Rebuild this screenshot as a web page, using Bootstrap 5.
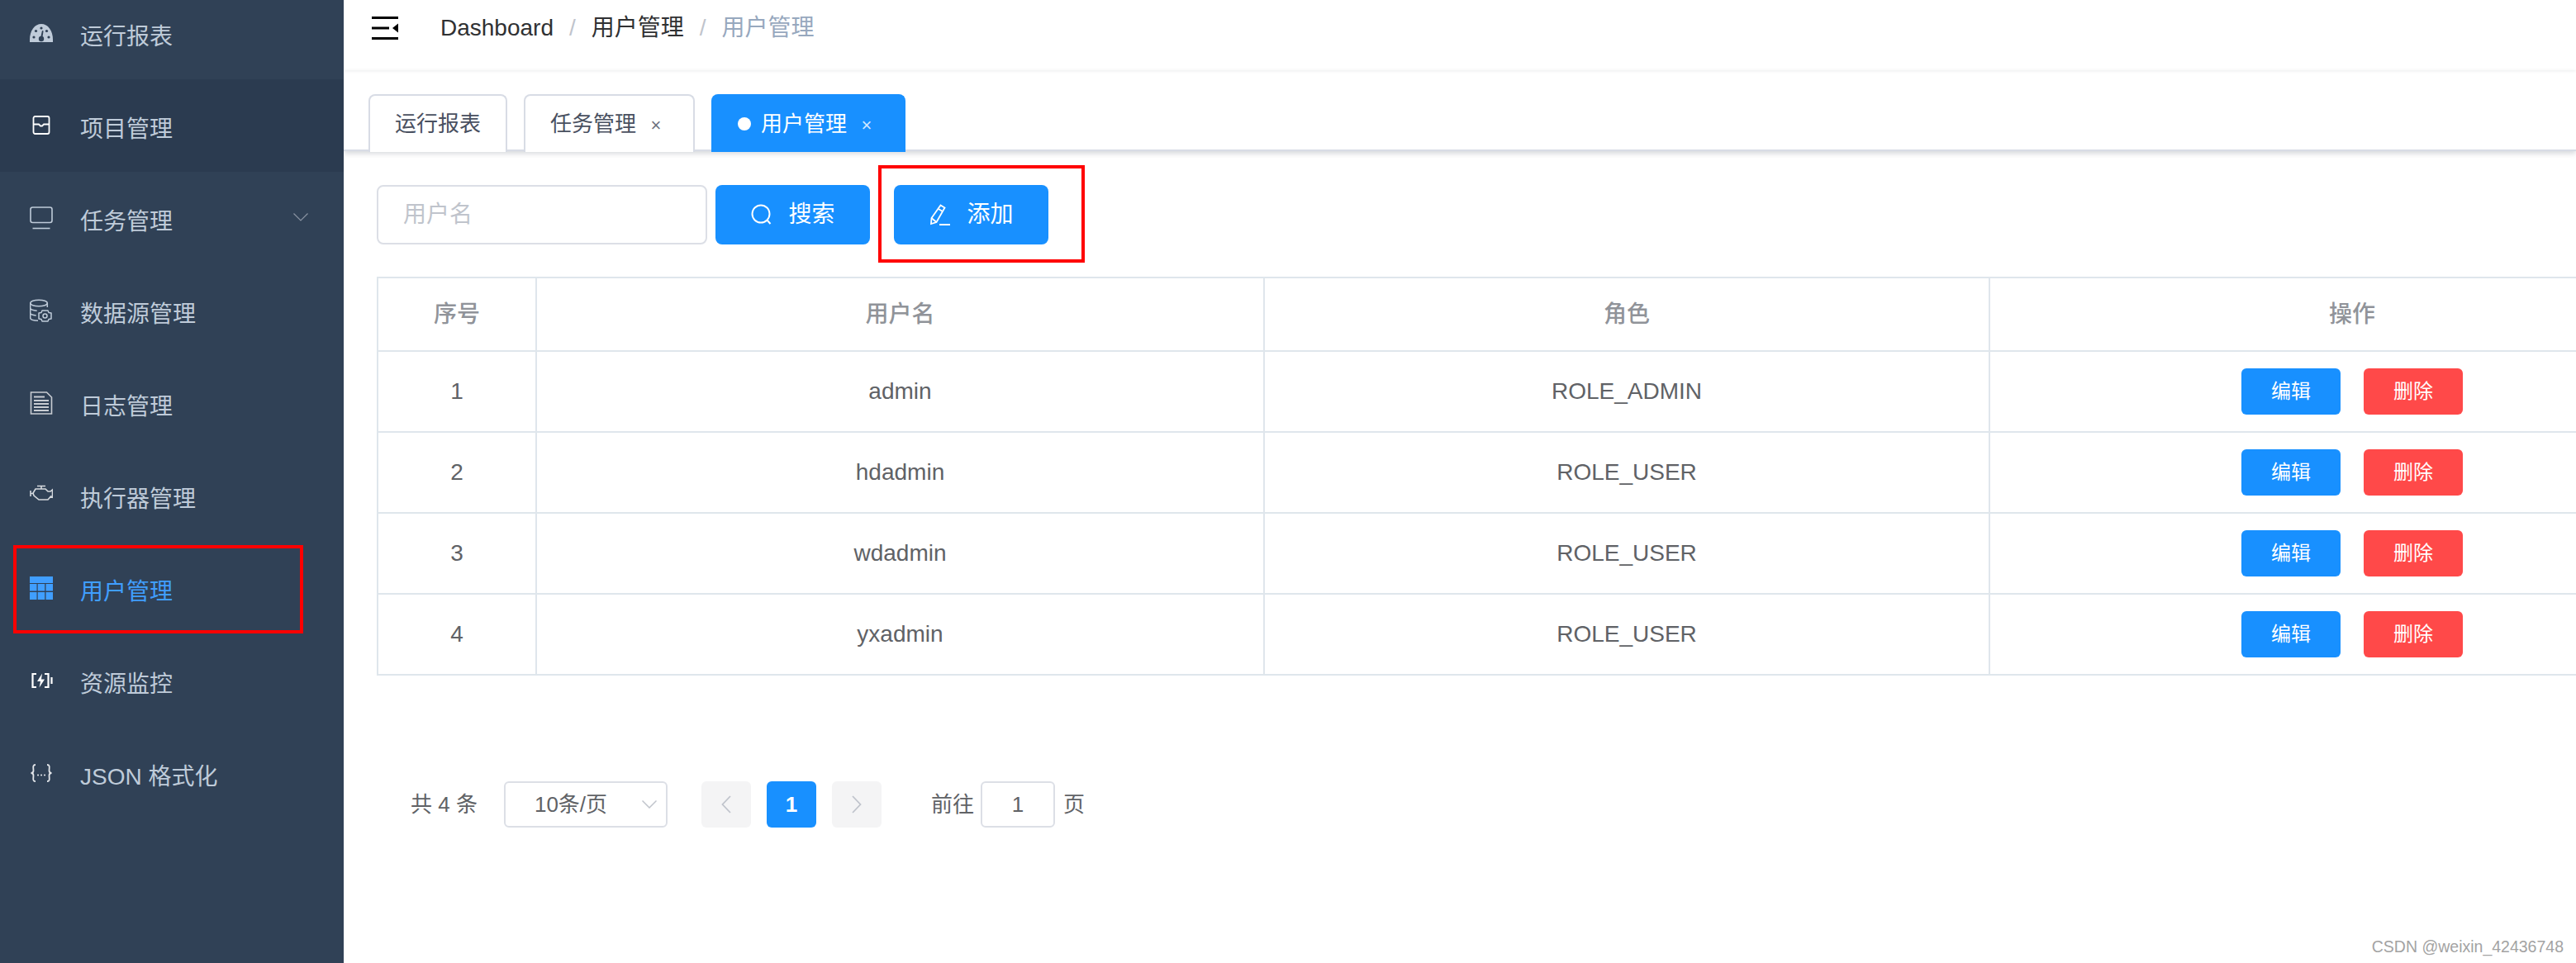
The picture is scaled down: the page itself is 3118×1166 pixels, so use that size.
<!DOCTYPE html>
<html lang="zh-CN">
<head>
<meta charset="utf-8">
<title>用户管理</title>
<link href="https://cdn.jsdelivr.net/npm/bootstrap@5.3.0/dist/css/bootstrap.min.css" rel="stylesheet">
<style>
html,body{height:1166px;overflow:hidden}
body{font-family:"Liberation Sans","Noto Sans CJK SC",sans-serif;font-size:28px;color:#606266;background:#fff;position:relative}
.shell{height:1166px}
.side{width:416px;flex:none;background:#304156;overflow:hidden}
.side-list{margin-top:-16px}
.side-item{height:112px;padding-left:36px;color:#bfcbd9;font-size:28px;text-decoration:none;gap:33px;position:relative}
.side-item span{padding-top:9px}
.side-item svg{width:28px;height:28px;flex:none;display:block}
.side-item.dim{background:#2b3b50}
.side-item.on{color:#409eff}
.side-chev{position:absolute;left:355px;top:50px;width:18px!important;height:10px!important}
.main-col{min-width:0;overflow:hidden}
.topbar{height:85px;padding-left:34px;box-shadow:0 1px 4px rgba(0,21,41,.08);position:relative}
.burger{width:32px;height:28px;margin-right:51px;margin-top:-18px;display:block}
.crumbs{--bs-breadcrumb-margin-bottom:0;--bs-breadcrumb-item-padding-x:19px;--bs-breadcrumb-divider-color:#c0c4cc;font-size:28px;margin-top:-17px;color:#303133}
.crumbs .breadcrumb-item{color:#303133}
.crumbs .breadcrumb-item.active{color:#97a8be}
.tabbar{height:98px;padding:29px 0 0 30px;gap:20px;border-bottom:2px solid #d8dce5;box-shadow:0 3px 6px rgba(0,21,41,.16);position:relative;align-items:flex-start}
.tabchip{height:70px;border:2px solid #d8dce5;border-bottom:0;border-radius:8px 8px 0 0;padding:0 30px;font-size:26px;color:#495060;background:#fff;flex:none}
.tabchip.hasx{padding-right:38px}
.tabchip.cur{background:#1890ff;border-color:#1890ff;color:#fff}
.tabx{font-size:22px;width:14px;text-align:center;margin-left:17px;line-height:1;padding-top:3px;font-weight:300;opacity:.8}
.tabdot{width:16px;height:16px;border-radius:50%;background:#fff;margin-right:12px}
.workarea{padding:41px 0 0 40px}
.toolrow{margin-bottom:39px;height:72px}
.namebox.form-control{width:400px;height:72px;flex:none;border:2px solid #dcdfe6;border-radius:8px;font-size:28px;padding:0 30px;margin-right:10px;box-shadow:none;color:#606266}
.namebox.form-control::placeholder{color:#c0c4cc}
.actbtn.btn{width:187px;height:72px;background:#1890ff;border:0;border-radius:8px;color:#fff;font-size:28px;padding:0;gap:18px}
.actbtn svg{width:28px;height:28px;display:block}
.addgap{margin-left:29px}
.grid-wrap{width:2829px}
.utable.table{width:2829px;table-layout:fixed;margin:0;--bs-table-border-color:#dfe6ec;--bs-table-color:#606266;border-width:2px;font-size:28px}
.utable.table>*>*>*{border-width:2px;padding:0;text-align:center;vertical-align:middle;height:98px}
.utable.table>thead>tr>th{height:89px;color:#909399;font-weight:500}
.c1{width:192px}.c2{width:881px}.c3{width:878px}.c4{width:878px}
.rowbtn.btn{width:120px;height:56px;padding:0;border:0;border-radius:6px;font-size:24px;color:#fff;background:#1890ff}
.rowbtn.del.btn{background:#ff4949;margin-left:28px}
.pager{margin-top:128px;padding-left:41px;height:56px;font-size:26px;color:#606266}
.sizebox{width:198px;height:56px;border:2px solid #dcdfe6;border-radius:6px;margin-left:32px;padding-left:35px;position:relative}
.sizebox svg{position:absolute;left:165px;top:21px;width:18px;height:10px}
.pagination.pgset{margin:0 0 0 41px;gap:20px;--bs-pagination-border-width:0}
.pgset .page-link{width:60px;height:56px;padding:0;border:0;border-radius:6px!important;background:#f4f4f5;display:flex;align-items:center;justify-content:center;color:#c0c4cc;font-size:26px}
.pgset .page-item.active .page-link{background:#1890ff;color:#fff;font-weight:700}
.pgset svg{width:12px;height:22px}
.jump-lab{margin-left:60px}
.jumpbox{width:90px;height:56px;border:2px solid #dcdfe6;border-radius:6px;margin:0 10px 0 8px}
.redmark{position:absolute;border:4px solid #f00;pointer-events:none}
.mark-a{left:16px;top:660px;width:351px;height:107px}
.mark-b{left:1063px;top:200px;width:250px;height:118px}
.wmark{position:absolute;right:15px;top:1134px;font-size:19.5px;line-height:24px;color:#a3a3a3;white-space:nowrap}
</style>
</head>
<body>
<div class="shell d-flex">
  <aside class="side">
    <nav class="side-list d-flex flex-column">
      <a class="side-item d-flex align-items-center" href="#">
        <svg viewBox="0 0 28 28"><path fill="#bfcbd9" d="M0 25v-3C0 11 6 3 14 3s14 8 14 19v3z"/><g fill="#304156"><circle cx="5" cy="19" r="1.600"/><circle cx="7.500" cy="11.500" r="1.600"/><circle cx="14" cy="8" r="1.600"/><circle cx="20.500" cy="11.500" r="1.600"/><circle cx="23" cy="19" r="1.600"/><circle cx="14" cy="21" r="3.200"/><path d="M13 20l2-9 1.600.4-1.400 9z"/></g></svg>
        <span>运行报表</span>
      </a>
      <a class="side-item dim d-flex align-items-center" href="#">
        <svg viewBox="0 0 28 28" fill="none" stroke="#fff" stroke-width="1.800"><rect x="4.500" y="3" width="19" height="21" rx="2"/><path d="M4.500 12.500h6.500l2 2h2l2-2h6.500"/></svg>
        <span>项目管理</span>
      </a>
      <a class="side-item d-flex align-items-center" href="#">
        <svg viewBox="0 0 28 28" fill="none" stroke="#bfcbd9" stroke-width="1.600"><rect x="1" y="1" width="26" height="18.500" rx="2.500"/><path d="M3.500 26.500h21"/></svg>
        <span>任务管理</span>
        <svg class="side-chev" viewBox="0 0 18 10" fill="none" stroke="#8a94a3" stroke-width="1.200"><path d="M.5.5L9 9 17.500.5"/></svg>
      </a>
      <a class="side-item d-flex align-items-center" href="#">
        <svg viewBox="0 0 28 28" fill="none" stroke="#bfcbd9" stroke-width="1.500" stroke-linejoin="round"><ellipse cx="11" cy="5" rx="10.300" ry="3.800"/><path d="M.7 5v18c0 1.800 3.500 3.200 9.300 3.200M.7 11c0 1.500 3 2.800 8 3.200M.7 17c0 1.500 2.500 2.500 7 3M21.300 5v5"/><circle cx="18.500" cy="20.500" r="2.500"/><path d="M15 14h7l1 2.500 3 .5v7l-3 .5-1 2.500h-7l-1-2.500-3-.5v-7l3-.5z"/></svg>
        <span>数据源管理</span>
      </a>
      <a class="side-item d-flex align-items-center" href="#">
        <svg viewBox="0 0 28 28" fill="none" stroke="#c8ccd2" stroke-width="1.600"><path d="M1.500 1h19l6 6v20H1.500z"/><path d="M5 6.500h13M5 11h18M5 15h18M5 19h18M5 23h18" stroke-width="1.800"/></svg>
        <span>日志管理</span>
      </a>
      <a class="side-item d-flex align-items-center" href="#">
        <svg viewBox="0 0 28 28" fill="none" stroke="#d5d9de" stroke-width="1.600"><path d="M1 8v7M1 11.500h3M4 11l3-5h12l3 3h3l2.500-2v9l-2-1-3.500 4H11l-6-5z"/><path d="M9 2.500h10M14 2.500V6"/></svg>
        <span>执行器管理</span>
      </a>
      <a class="side-item on d-flex align-items-center" href="#">
        <svg viewBox="0 0 28 28" fill="#409eff"><rect y="0" width="28" height="8"/><rect y="9" width="8.500" height="8.500"/><rect x="9.700" y="9" width="8.500" height="8.500"/><rect x="19.500" y="9" width="8.500" height="8.500"/><rect y="19" width="8.500" height="9"/><rect x="9.700" y="19" width="8.500" height="9"/><rect x="19.500" y="19" width="8.500" height="9"/></svg>
        <span>用户管理</span>
      </a>
      <a class="side-item d-flex align-items-center" href="#">
        <svg viewBox="0 0 28 28" fill="none" stroke="#fff" stroke-width="2.200"><path d="M8 6H3.500v16H8M18 6h4.500v16H18M26.500 10v8"/><path fill="#fff" stroke="none" d="M15 5.500l-6 9.500h4l-1.500 7.500 6.500-10h-4z"/></svg>
        <span>资源监控</span>
      </a>
      <a class="side-item d-flex align-items-center" href="#">
        <svg viewBox="0 0 28 28" fill="none" stroke="#e4e7eb" stroke-width="1.800"><path d="M7 4C3 4 4.500 8 4.500 11S1.500 14 1.500 14s3 0 3 3-1.500 7 2.500 7M21 4c4 0 2.500 4 2.500 7s3 3 3 3-3 0-3 3 1.500 7-2.500 7"/><path d="M10 16.500h.1M14 16.500h.1M18 16.500h.1" stroke-width="2" stroke-linecap="round"/></svg>
        <span>JSON 格式化</span>
      </a>
    </nav>
  </aside>

  <main class="main-col flex-grow-1 d-flex flex-column">
    <header class="topbar d-flex align-items-center">
      <svg class="burger" viewBox="0 0 32 28" fill="#000"><rect width="32" height="3"/><rect y="12.500" width="21" height="3"/><rect y="25" width="32" height="3"/><path d="M32 8.500v11L25 14z"/></svg>
      <ol class="breadcrumb crumbs">
        <li class="breadcrumb-item">Dashboard</li>
        <li class="breadcrumb-item">用户管理</li>
        <li class="breadcrumb-item active">用户管理</li>
      </ol>
    </header>
    <div class="tabbar d-flex">
      <div class="tabchip d-flex align-items-center">运行报表</div>
      <div class="tabchip hasx d-flex align-items-center">任务管理<span class="tabx">×</span></div>
      <div class="tabchip hasx cur d-flex align-items-center"><span class="tabdot"></span>用户管理<span class="tabx">×</span></div>
    </div>
    <section class="workarea">
      <div class="toolrow d-flex">
        <input class="form-control namebox" type="text" placeholder="用户名">
        <button class="btn actbtn d-flex align-items-center justify-content-center" type="button">
          <svg viewBox="0 0 28 28" fill="none" stroke="#fff" stroke-width="2"><circle cx="13" cy="13" r="10.500"/><path d="M20.500 20.500l4 4.500"/></svg>搜索
        </button>
        <button class="btn actbtn addgap d-flex align-items-center justify-content-center" type="button">
          <svg viewBox="0 0 28 28" fill="none" stroke="#fff" stroke-width="1.800"><path d="M14.500 2.500l5 3L9.500 23 3 25l.5-7z"/><path d="M12 7l5 3M3.500 18l6 5M13 26h13"/></svg>添加
        </button>
      </div>
      <div class="grid-wrap">
        <table class="table table-bordered utable">
          <colgroup><col class="c1"><col class="c2"><col class="c3"><col class="c4"></colgroup>
          <thead><tr><th>序号</th><th>用户名</th><th>角色</th><th>操作</th></tr></thead>
          <tbody>
            <tr><td>1</td><td>admin</td><td>ROLE_ADMIN</td><td><button class="btn rowbtn" type="button">编辑</button><button class="btn rowbtn del" type="button">删除</button></td></tr>
            <tr><td>2</td><td>hdadmin</td><td>ROLE_USER</td><td><button class="btn rowbtn" type="button">编辑</button><button class="btn rowbtn del" type="button">删除</button></td></tr>
            <tr><td>3</td><td>wdadmin</td><td>ROLE_USER</td><td><button class="btn rowbtn" type="button">编辑</button><button class="btn rowbtn del" type="button">删除</button></td></tr>
            <tr><td>4</td><td>yxadmin</td><td>ROLE_USER</td><td><button class="btn rowbtn" type="button">编辑</button><button class="btn rowbtn del" type="button">删除</button></td></tr>
          </tbody>
        </table>
      </div>
      <div class="pager d-flex align-items-center">
        <span>共 4 条</span>
        <div class="sizebox d-flex align-items-center">10条/页
          <svg viewBox="0 0 18 10" fill="none" stroke="#c0c4cc" stroke-width="1.500"><path d="M.5.5L9 9 17.500.5"/></svg>
        </div>
        <ul class="pagination pgset">
          <li class="page-item"><a class="page-link" href="#"><svg viewBox="0 0 12 22" fill="none" stroke="#c0c4cc" stroke-width="1.800"><path d="M11 1L1.500 11 11 21"/></svg></a></li>
          <li class="page-item active"><a class="page-link" href="#">1</a></li>
          <li class="page-item"><a class="page-link" href="#"><svg viewBox="0 0 12 22" fill="none" stroke="#c0c4cc" stroke-width="1.800"><path d="M1 1l9.500 10L1 21"/></svg></a></li>
        </ul>
        <span class="jump-lab">前往</span>
        <div class="jumpbox d-flex align-items-center justify-content-center">1</div>
        <span>页</span>
      </div>
    </section>
  </main>
</div>
<div class="redmark mark-a"></div>
<div class="redmark mark-b"></div>
<div class="wmark">CSDN @weixin_42436748</div>
<script src="https://cdn.jsdelivr.net/npm/bootstrap@5.3.0/dist/js/bootstrap.bundle.min.js"></script>
</body>
</html>
